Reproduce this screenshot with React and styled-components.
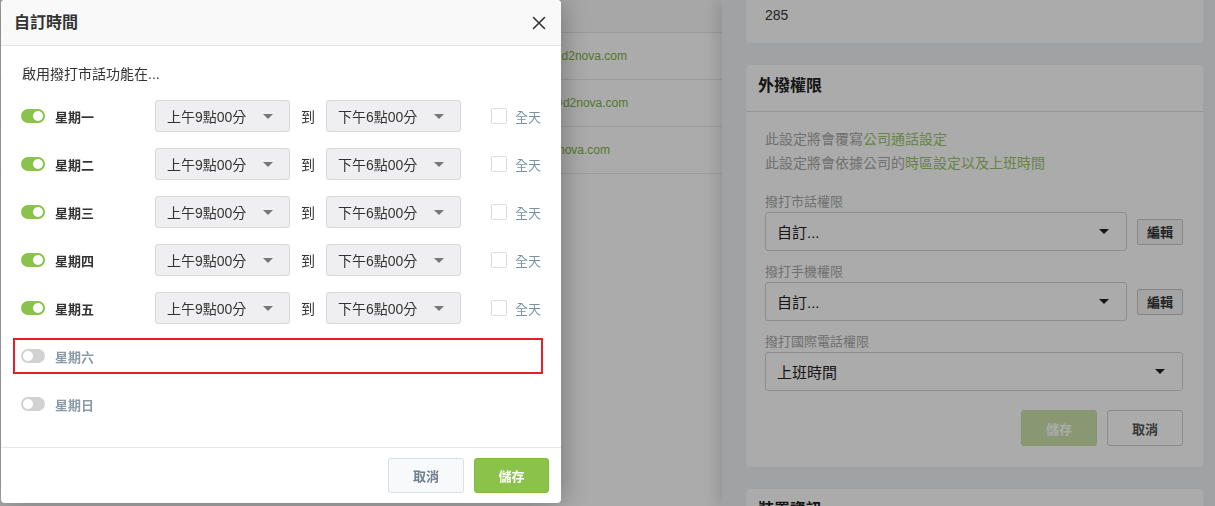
import React from 'react'
import styled, { createGlobalStyle } from 'styled-components'

const FONT = `"Liberation Sans", "Noto Sans CJK TC", sans-serif`

const days = [
	{ name: '星期一', on: true },
	{ name: '星期二', on: true },
	{ name: '星期三', on: true },
	{ name: '星期四', on: true },
	{ name: '星期五', on: true },
	{ name: '星期六', on: false, flagged: true },
	{ name: '星期日', on: false },
]

const users = [
	{ name: '陳文森', ext: '281', email: 'vincent.chen@d2nova.com' },
	{ name: '王雪倫', ext: '283', email: 'sharon.wang@d2nova.com' },
	{ name: '梁艾美', ext: '285', email: 'amy.liang@d2nova.com' },
]

const App = () => {
	return (
		<React.Fragment>
			<GlobalStyle />
			<Page>
				<MainPanel>
					<TableHead>
						<span>姓名</span>
						<span>分機</span>
						<span>電子郵件</span>
					</TableHead>
					{users.map((u) => (
						<TableRow key={u.email}>
							<span>{u.name}</span>
							<span>{u.ext}</span>
							<Email>{u.email}</Email>
						</TableRow>
					))}
				</MainPanel>
				<Drawer>
					<Stack>
						<Card>
							<InfoBody>
								<FieldLabel>分機號碼</FieldLabel>
								<Value>285</Value>
							</InfoBody>
						</Card>
						<Card>
							<CardHeader>外撥權限</CardHeader>
							<CardBody>
								<Note>
									此設定將會覆寫<Accent>公司通話設定</Accent>
								</Note>
								<Note>
									此設定將會依據公司的<Accent>時區設定以及上班時間</Accent>
								</Note>
								<Fields>
									<Field>
										<FieldLabel>撥打市話權限</FieldLabel>
										<FieldRow>
											<DrawerSelect>
												自訂...
												<DarkCaret />
											</DrawerSelect>
											<EditButton>編輯</EditButton>
										</FieldRow>
									</Field>
									<Field>
										<FieldLabel>撥打手機權限</FieldLabel>
										<FieldRow>
											<DrawerSelect>
												自訂...
												<DarkCaret />
											</DrawerSelect>
											<EditButton>編輯</EditButton>
										</FieldRow>
									</Field>
									<Field>
										<FieldLabel>撥打國際電話權限</FieldLabel>
										<FieldRow>
											<DrawerSelect>
												上班時間
												<DarkCaret />
											</DrawerSelect>
										</FieldRow>
									</Field>
								</Fields>
								<CardActions>
									<PrimaryButton $wide="76px" disabled>
										儲存
									</PrimaryButton>
									<PlainButton>取消</PlainButton>
								</CardActions>
							</CardBody>
						</Card>
						<Card>
							<CardHeader>裝置資訊</CardHeader>
						</Card>
					</Stack>
				</Drawer>
			</Page>

			<Overlay />
			<Modal>
				<ModalHeader>
					<ModalTitle>自訂時間</ModalTitle>
					<CloseButton aria-label="close">
						<svg width="14" height="14" viewBox="0 0 14 14">
							<path
								d="M1.5 1.5 L12.5 12.5 M12.5 1.5 L1.5 12.5"
								stroke="#333"
								strokeWidth="1.6"
								strokeLinecap="round"
							/>
						</svg>
					</CloseButton>
				</ModalHeader>
				<ModalBody>
					<Intro>啟用撥打市話功能在...</Intro>
					<DayList>
						{days.map((d) => (
							<DayRow key={d.name} $flagged={d.flagged}>
								<Toggle $on={d.on} />
								<DayName $on={d.on}>{d.name}</DayName>
								{d.on && (
									<React.Fragment>
										<TimeSelect>
											上午9點00分
											<Caret />
										</TimeSelect>
										<To>到</To>
										<TimeSelect>
											下午6點00分
											<Caret />
										</TimeSelect>
										<AllDay>
											<Checkbox />
											全天
										</AllDay>
									</React.Fragment>
								)}
							</DayRow>
						))}
					</DayList>
				</ModalBody>
				<ModalFooter>
					<CancelButton>取消</CancelButton>
					<PrimaryButton $wide="75px">儲存</PrimaryButton>
				</ModalFooter>
			</Modal>
		</React.Fragment>
	)
}

/* ---------- background page ---------- */

const Page = styled.div`
	display: flex;
	width: 1215px;
	height: 506px;
	overflow: hidden;
`
const MainPanel = styled.div`
	width: 722px;
	flex-shrink: 0;
	background: #fff;
`
const TableHead = styled.div`
	display: grid;
	grid-template-columns: 180px 282px 1fr;
	height: 32px;
	align-items: center;
	padding-left: 20px;
	background: #fafafa;
	border-bottom: 1px solid #e4e4e4;
	font-size: 12px;
	font-weight: bold;
	color: #555;
`
const TableRow = styled.div`
	display: grid;
	grid-template-columns: 180px 282px 1fr;
	height: 46px;
	align-items: center;
	padding-left: 20px;
	border-bottom: 1px solid #e8e8e8;
	font-size: 12px;
	color: #333;
`
const Email = styled.span`
	color: #7cb342;
`
const Drawer = styled.div`
	flex: 1;
	position: relative;
	z-index: 1;
	background: #f0f2f5;
	padding: 0 12px 0 24px;
	box-shadow: -6px 0 14px rgba(0, 0, 0, 0.12);
	overflow: hidden;
`
const Stack = styled.div`
	display: flex;
	flex-direction: column;
	gap: 22px;
	margin-top: -35px;
`
const Card = styled.div`
	background: #fff;
	border-radius: 4px;
`
const InfoBody = styled.div`
	display: flex;
	flex-direction: column;
	gap: 4px;
	padding: 18px 19px 18px;
`
const Value = styled.div`
	font-size: 14px;
	line-height: 20px;
	color: #333;
`
const CardHeader = styled.div`
	padding: 10px 12px 14px;
	font-size: 16px;
	line-height: 22px;
	font-weight: bold;
	color: #222;
	border-bottom: 1px solid #dedede;
`
const CardBody = styled.div`
	padding: 15px 20px 21px 19px;
`
const Note = styled.div`
	font-size: 14px;
	line-height: 24px;
	color: #a8a8a8;
`
const Accent = styled.span`
	color: #9ac46c;
`
const Fields = styled.div`
	display: flex;
	flex-direction: column;
	gap: 12px;
	margin-top: 18px;
`
const Field = styled.div`
	display: flex;
	flex-direction: column;
	gap: 1px;
`
const FieldLabel = styled.div`
	font-size: 13px;
	line-height: 18px;
	color: #a8a8a8;
`
const FieldRow = styled.div`
	display: flex;
	align-items: center;
	gap: 10px;
`
const DrawerSelect = styled.div`
	flex: 1;
	height: 39px;
	box-sizing: border-box;
	display: flex;
	align-items: center;
	justify-content: space-between;
	padding: 0 17px 0 11px;
	border: 1px solid #d4d4d4;
	border-radius: 3px;
	background: #fff;
	font-size: 15px;
	color: #222;
`
const DarkCaret = styled.span`
	width: 0;
	height: 0;
	border-left: 5px solid transparent;
	border-right: 5px solid transparent;
	border-top: 5px solid #222;
`
const EditButton = styled.button`
	width: 46px;
	height: 26px;
	padding: 0;
	border: 1px solid #c8c8c8;
	border-radius: 2px;
	background: #f5f5f5;
	font-family: ${FONT};
	font-size: 13px;
	font-weight: bold;
	color: #333;
`
const CardActions = styled.div`
	display: flex;
	justify-content: flex-end;
	gap: 10px;
	margin-top: 19px;
`
const PlainButton = styled.button`
	width: 76px;
	height: 36px;
	border: 1px solid #cfcfcf;
	border-radius: 3px;
	background: #fff;
	font-family: ${FONT};
	font-size: 13px;
	font-weight: bold;
	color: #555;
`

/* ---------- modal ---------- */

const Overlay = styled.div`
	position: fixed;
	inset: 0;
	z-index: 10;
	background: rgba(0, 0, 0, 0.33);
`
const Modal = styled.div`
	position: fixed;
	top: 0;
	left: 1px;
	z-index: 11;
	width: 560px;
	height: 503px;
	display: flex;
	flex-direction: column;
	background: #fff;
	border-radius: 4px;
	box-shadow: 0 0 30px rgba(0, 0, 0, 0.35);
	overflow: hidden;
`
const ModalHeader = styled.div`
	height: 45px;
	flex-shrink: 0;
	display: flex;
	align-items: center;
	justify-content: space-between;
	padding: 0 15px 0 13px;
	background: #f9f9f9;
	border-bottom: 1px solid #e6e6e6;
`
const ModalTitle = styled.div`
	font-size: 16px;
	line-height: 22px;
	font-weight: bold;
	color: #333;
`
const CloseButton = styled.button`
	display: flex;
	padding: 0;
	border: none;
	background: none;
`
const ModalBody = styled.div`
	flex: 1;
	padding: 18px 18px 0 12px;
`
const Intro = styled.div`
	padding-left: 9px;
	font-size: 14px;
	line-height: 20px;
	color: #333;
`
const DayList = styled.div`
	display: flex;
	flex-direction: column;
	gap: 12px;
	margin-top: 14px;
`
const DayRow = styled.div`
	height: 36px;
	box-sizing: border-box;
	display: flex;
	align-items: center;
	padding-left: 6px;
	border: 2px solid ${(p) => (p.$flagged ? '#e41f26' : 'transparent')};
`
const Toggle = styled.span`
	position: relative;
	width: 24px;
	height: 14px;
	flex-shrink: 0;
	border-radius: 7px;
	background: ${(p) => (p.$on ? '#8bc34a' : '#d2d2d2')};

	&::after {
		content: '';
		position: absolute;
		top: 2px;
		left: ${(p) => (p.$on ? '12px' : '2px')};
		width: 10px;
		height: 10px;
		border-radius: 50%;
		background: #fff;
	}
`
const DayName = styled.span`
	width: 100px;
	flex-shrink: 0;
	margin-left: 10px;
	font-size: 13px;
	font-weight: bold;
	color: ${(p) => (p.$on ? '#333' : '#8a9aa8')};
`
const TimeSelect = styled.div`
	width: 135px;
	height: 32px;
	flex-shrink: 0;
	box-sizing: border-box;
	display: flex;
	align-items: center;
	justify-content: space-between;
	padding: 0 16px 0 11px;
	border: 1px solid #d8d8d8;
	border-radius: 3px;
	background: #efeff1;
	font-size: 14px;
	color: #333;
`
const Caret = styled.span`
	width: 0;
	height: 0;
	border-left: 5px solid transparent;
	border-right: 5px solid transparent;
	border-top: 5px solid #777;
`
const To = styled.span`
	flex-shrink: 0;
	margin: 0 11px;
	font-size: 14px;
	color: #333;
`
const AllDay = styled.label`
	display: flex;
	align-items: center;
	gap: 8px;
	margin-left: 30px;
	white-space: nowrap;
	font-size: 13px;
	color: #7c93a6;
`
const Checkbox = styled.span`
	width: 16px;
	height: 16px;
	flex-shrink: 0;
	box-sizing: border-box;
	border: 1px solid #d6dde3;
	border-radius: 2px;
	background: #fff;
`
const ModalFooter = styled.div`
	height: 56px;
	flex-shrink: 0;
	box-sizing: border-box;
	display: flex;
	justify-content: flex-end;
	gap: 10px;
	padding: 10px 12px 11px;
	border-top: 1px solid #e8e8e8;
`
const CancelButton = styled.button`
	width: 76px;
	height: 35px;
	border: 1px solid #d9dee3;
	border-radius: 3px;
	background: #f8f9fa;
	font-family: ${FONT};
	font-size: 13px;
	font-weight: bold;
	color: #6f8091;
`
const PrimaryButton = styled.button`
	width: ${(p) => p.$wide};
	height: ${(p) => (p.disabled ? '36px' : '35px')};
	border: 1px solid #7fba3c;
	border-radius: 3px;
	background: #8bc34a;
	font-family: ${FONT};
	font-size: 13px;
	font-weight: bold;
	color: #fff;

	&:disabled {
		opacity: 0.45;
	}
`

const GlobalStyle = createGlobalStyle`
	html, body {
		margin: 0;
		overflow: hidden;
	}
	body {
		font-family: ${FONT};
	}
`

export default App
